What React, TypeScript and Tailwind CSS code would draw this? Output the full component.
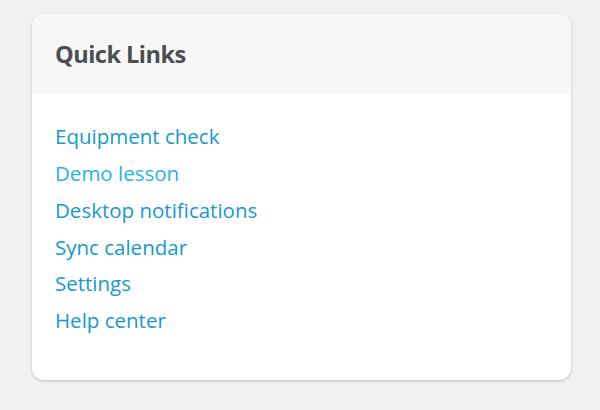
import React from 'react';

const links = [
  { label: 'Equipment check', hover: false },
  { label: 'Demo lesson', hover: true },
  { label: 'Desktop notifications', hover: false },
  { label: 'Sync calendar', hover: false },
  { label: 'Settings', hover: false },
  { label: 'Help center', hover: false },
];

export default function App() {
  return (
    <div className="min-h-screen w-[600px] h-[410px] bg-[#f1f1f1] pt-[14px] pl-[32px] font-['Open_Sans',sans-serif]">
      <div className="w-[539px] h-[366px] overflow-hidden rounded-[12px] bg-white shadow-[0_1px_3px_rgba(0,0,0,0.22)]">
        <div className="flex h-[80px] items-center bg-[#f7f7f7] px-[23px] pt-[2px]">
          <h2 className="text-[23.5px] font-bold tracking-[-0.5px] text-[#4b4f54]">Quick Links</h2>
        </div>
        <ul className="flex flex-col px-[23px] pt-[24px]">
          {links.map((l) => (
            <li key={l.label} className="h-[36.8px] flex items-center">
              <a
                href="#"
                className={
                  'text-[20.5px] leading-none ' +
                  (l.hover ? 'text-[#28b2e6]' : 'text-[#1699d3]')
                }
              >
                {l.label}
              </a>
            </li>
          ))}
        </ul>
      </div>
    </div>
  );
}
